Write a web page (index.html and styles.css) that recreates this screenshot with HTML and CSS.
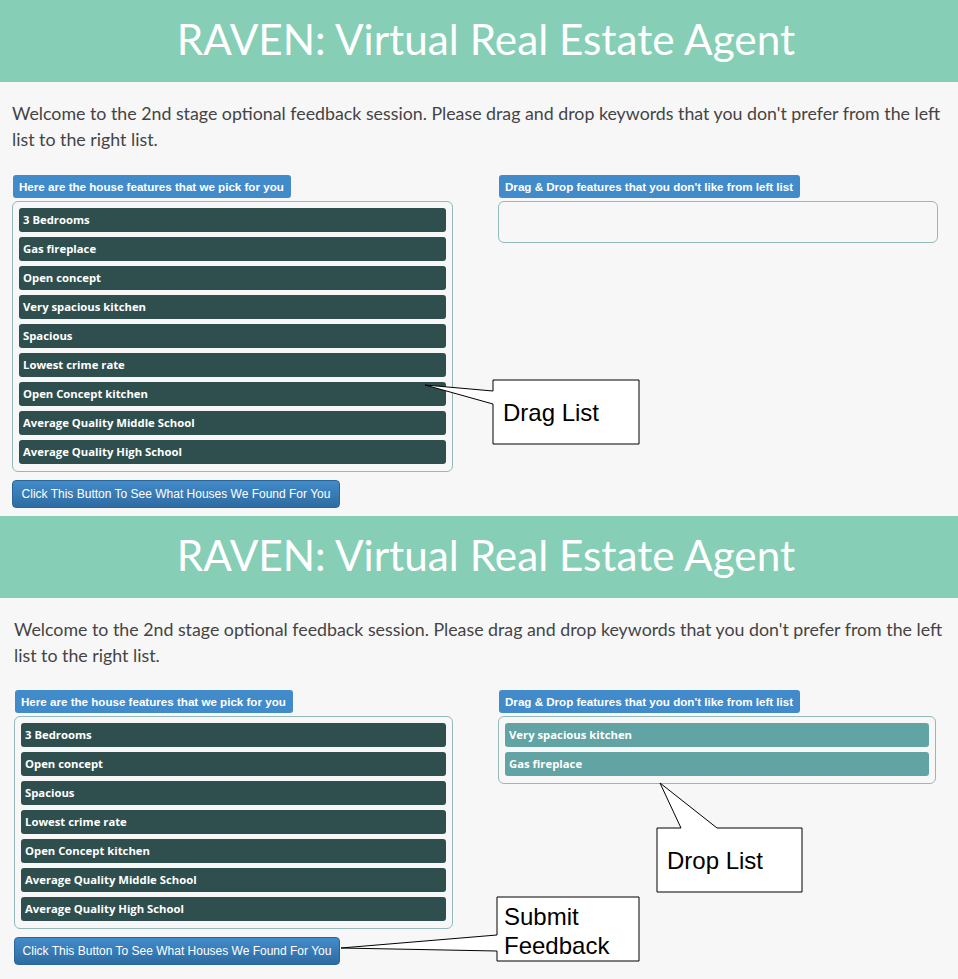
FILE: index.html
```html
<!DOCTYPE html>
<html>
<head>
<meta charset="utf-8">
<link rel="stylesheet" href="styles.css">
</head>
<body>
<div class="page">
  <section class="screen">
    <header class="hero"><h1>RAVEN: Virtual Real Estate Agent</h1></header>
    <p class="intro">Welcome to the 2nd stage optional feedback session. Please drag and drop keywords that you don't prefer from the left list to the right list.</p>
    <div class="cols">
      <div class="col">
        <span class="label">Here are the house features that we pick for you</span>
        <ul class="list">
          <li class="item">3 Bedrooms</li>
          <li class="item">Gas fireplace</li>
          <li class="item">Open concept</li>
          <li class="item">Very spacious kitchen</li>
          <li class="item">Spacious</li>
          <li class="item">Lowest crime rate</li>
          <li class="item">Open Concept kitchen</li>
          <li class="item">Average Quality Middle School</li>
          <li class="item">Average Quality High School</li>
        </ul>
        <button class="btn">Click This Button To See What Houses We Found For You</button>
      </div>
      <div class="col">
        <span class="label">Drag &amp; Drop features that you don't like from left list</span>
        <ul class="list list-empty"></ul>
      </div>
    </div>
  </section>
  <section class="screen screen-second">
    <header class="hero"><h1>RAVEN: Virtual Real Estate Agent</h1></header>
    <p class="intro">Welcome to the 2nd stage optional feedback session. Please drag and drop keywords that you don't prefer from the left list to the right list.</p>
    <div class="cols">
      <div class="col">
        <span class="label">Here are the house features that we pick for you</span>
        <ul class="list">
          <li class="item">3 Bedrooms</li>
          <li class="item">Open concept</li>
          <li class="item">Spacious</li>
          <li class="item">Lowest crime rate</li>
          <li class="item">Open Concept kitchen</li>
          <li class="item">Average Quality Middle School</li>
          <li class="item">Average Quality High School</li>
        </ul>
        <button class="btn">Click This Button To See What Houses We Found For You</button>
      </div>
      <div class="col">
        <span class="label">Drag &amp; Drop features that you don't like from left list</span>
        <ul class="list">
          <li class="item item-dropped">Very spacious kitchen</li>
          <li class="item item-dropped">Gas fireplace</li>
        </ul>
      </div>
    </div>
  </section>

  <svg class="callouts" width="958" height="979" viewBox="0 0 958 979">
    <polygon points="493,380 639,380 639,444 493,444 493,404 425,385 493,391" />
    <polygon points="657,828 681,828 660,783 717,828 802,828 802,892 657,892" />
    <polygon points="497,897 639,897 639,961 497,961 497,951 341,948 497,935" />
  </svg>
  <div class="callout-text callout-drag">Drag List</div>
  <div class="callout-text callout-drop">Drop List</div>
  <div class="callout-text callout-submit">Submit<br>Feedback</div>
</div>
</body>
</html>
```

FILE: styles.css
```css
* { box-sizing: border-box; }
html, body { margin: 0; padding: 0; background: #f7f7f7; }
.page { position: relative; width: 958px; height: 979px; overflow: hidden; }

.screen { height: 516px; }
.screen-second { height: 463px; }

.hero {
  height: 82px;
  background: #86cfb6;
  display: flex;
  align-items: center;
  justify-content: center;
  padding-left: 14px;
}
.hero h1 {
  margin: 0 0 6px;
  font-family: "Lato", "Open Sans", sans-serif;
  font-weight: 400;
  font-size: 42.3px;
  color: #ffffff;
}

.intro {
  margin: 18px 8px 23px 12px;
  font-family: "Lato", "Open Sans", sans-serif;
  font-size: 17.8px;
  line-height: 26px;
  color: #444;
}
.screen-second .intro { margin-left: 14px; margin-right: 6px; margin-bottom: 22px; }

.cols {
  display: grid;
  grid-template-columns: 441px 440px;
  column-gap: 45px;
  padding-left: 12px;
}
.screen-second .cols {
  grid-template-columns: 439px 438px;
  padding-left: 14px;
}
.col { display: flex; flex-direction: column; align-items: flex-start; }

.label {
  display: inline-block;
  height: 23px;
  line-height: 23px;
  padding: 0 7px 0 6px;
  margin-left: 1px;
  background: #428bca;
  color: #fff;
  font-family: "Liberation Sans", Arial, sans-serif;
  font-weight: bold;
  font-size: 11.6px;
  border-radius: 3px;
}

.list {
  list-style: none;
  margin: 3px 0 0;
  padding: 6px 6px 7px;
  width: 100%;
  border: 1px solid #93b9b9;
  border-radius: 6px;
  display: flex;
  flex-direction: column;
  gap: 5px;
}
.list-empty { height: 42px; }

.item {
  height: 24px;
  line-height: 24px;
  padding-left: 4px;
  background: #2f4f4f;
  color: #fff;
  border-radius: 3px;
  font-family: "Open Sans", sans-serif;
  font-weight: 700;
  font-size: 11.3px;
}
.item-dropped { background: #62a3a3; }

.btn {
  margin-top: 8px;
  height: 28px;
  width: 328px;
  padding: 0;
  border: 1px solid #2b669a;
  border-radius: 4px;
  background: linear-gradient(#428bca, #2d6ca2);
  color: #fff;
  font-family: "Liberation Sans", Arial, sans-serif;
  font-size: 12px;
  text-align: center;
}
.screen-second .btn { width: 326px; }

.callouts { position: absolute; left: 0; top: 0; pointer-events: none; }
.callouts polygon { fill: #fff; stroke: #000; stroke-width: 1; }

.callout-text {
  position: absolute;
  font-family: "Liberation Sans", Arial, sans-serif;
  font-size: 24px;
  line-height: 29px;
  color: #000;
}
.callout-drag { left: 503px; top: 398px; }
.callout-drop { left: 667px; top: 846px; }
.callout-submit { left: 504px; top: 902px; }
```
